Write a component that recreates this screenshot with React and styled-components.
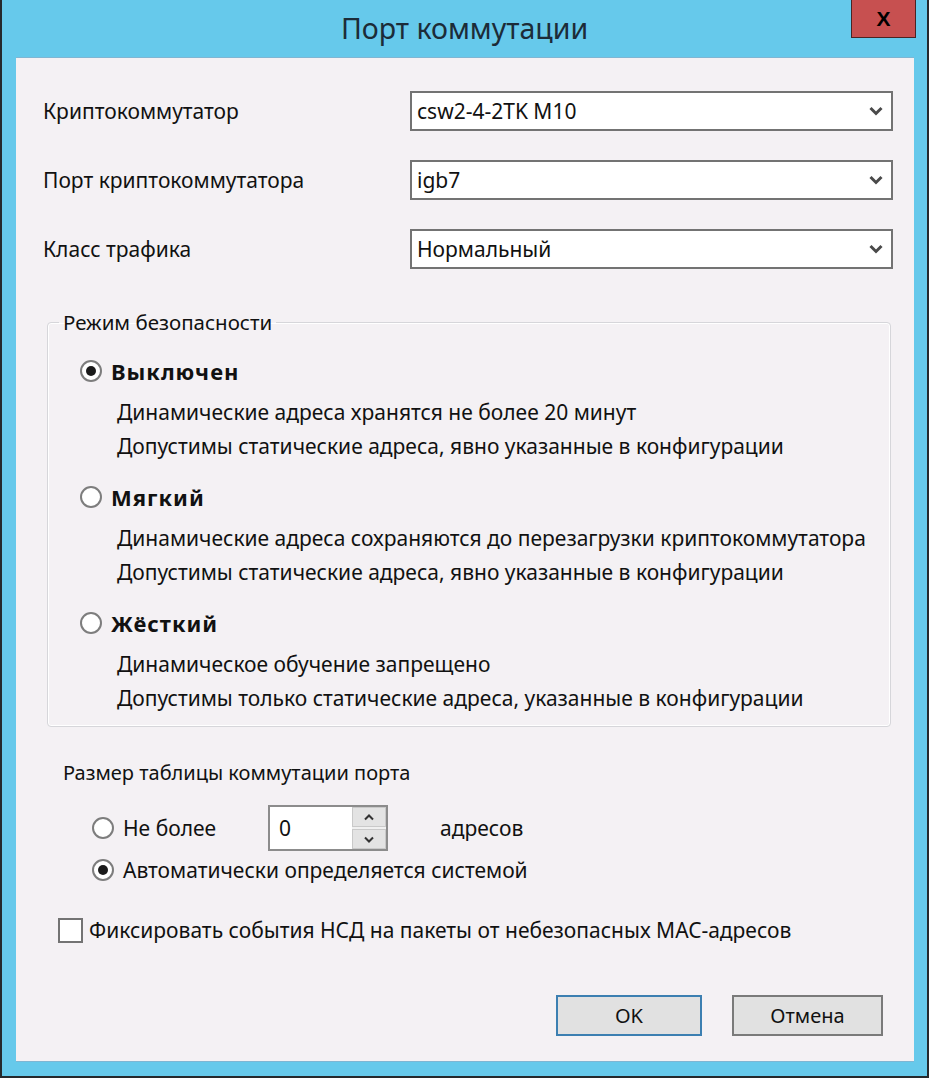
import React from "react";
import styled, { createGlobalStyle } from "styled-components";

const GlobalStyle = createGlobalStyle`
  html, body {
    margin: 0;
    padding: 0;
    background: #ffffff;
  }
  body {
    font-family: "Noto Sans", "Liberation Sans", sans-serif;
    color: #111111;
  }
`;

const Window = styled.div`
  box-sizing: border-box;
  width: 929px;
  height: 1078px;
  background: #66c9eb;
  border: 2px solid #25292c;
  border-top: none;
  display: flex;
  flex-direction: column;
`;

const TitleBar = styled.div`
  height: 57px;
  flex: none;
  display: grid;
  grid-template-columns: 1fr auto 1fr;
  align-items: start;
`;

const Title = styled.div`
  grid-column: 2;
  font-size: 28.5px;
  line-height: 56px;
  color: #1c2c38;
`;

const CloseButton = styled.div`
  grid-column: 3;
  justify-self: end;
  margin-right: 11px;
  box-sizing: border-box;
  width: 65px;
  height: 38px;
  background: #c75050;
  border: 1px solid #4a2424;
  border-top: none;
  display: flex;
  align-items: center;
  justify-content: center;
  font-family: "Liberation Sans", sans-serif;
  font-weight: 700;
  font-size: 21px;
  color: #000;
`;

const Body = styled.div`
  flex: 1;
  margin: 0 13px 14px 14px;
  background: #f4f1f4;
  border-top: 1px solid #7fb6d3;
  border-bottom: 1px solid #7fb6d3;
  padding: 33px 21px 0 27px;
  display: flex;
  flex-direction: column;
  font-size: 21px;
`;

const FormGrid = styled.div`
  display: grid;
  grid-template-columns: 367px 483px;
  grid-auto-rows: 40px;
  row-gap: 29px;
  align-items: center;
`;

const Label = styled.div`
  line-height: 28px;
`;

const Combo = styled.div`
  box-sizing: border-box;
  height: 40px;
  background: #ffffff;
  border: 2px solid #737373;
  display: flex;
  align-items: center;
  padding: 0 8px 0 5px;
`;

const ComboValue = styled.span`
  flex: 1;
  font-size: 21px;
`;

const Chevron = () => (
  <svg width="14" height="10" viewBox="0 0 14 10">
    <path d="M1.5 2 L7 7.5 L12.5 2" fill="none" stroke="#4a4a4a" strokeWidth="3" />
  </svg>
);

const GroupBox = styled.fieldset`
  box-sizing: border-box;
  width: 844px;
  margin: 39px 0 0 4px;
  padding: 18px 10px 11px 11px;
  border: 1px solid #d6d6da;
  border-radius: 4px;
  box-shadow: inset 0 0 0 1px #ffffff;
`;

const Legend = styled.legend`
  padding: 0 4px;
  line-height: 28px;
  font-size: 20.5px;
`;

const Option = styled.div`
  margin-left: 21px;
  & + & {
    margin-top: 17px;
  }
`;

const RadioRow = styled.div`
  display: flex;
  align-items: center;
  gap: 9px;
  height: 34px;
`;

const Radio = styled.span`
  box-sizing: border-box;
  width: 22px;
  height: 22px;
  flex: none;
  border-radius: 50%;
  border: 2px solid #7d7d7d;
  background: #ffffff;
  display: flex;
  align-items: center;
  justify-content: center;
  &::after {
    content: "";
    width: 10px;
    height: 10px;
    border-radius: 50%;
    background: #1a1a1a;
    display: ${(p) => (p.$checked ? "block" : "none")};
  }
`;

const OptionTitle = styled.span`
  font-weight: 700;
  font-size: 22px;
  letter-spacing: 1px;
`;

const Desc = styled.div`
  margin: 7px 0 0 37px;
  line-height: 34px;
`;

const SectionLabel = styled.div`
  margin: 32px 0 0 20px;
  line-height: 28px;
  font-size: 20px;
`;

const SizeRows = styled.div`
  margin: 18px 0 0 49px;
  display: flex;
  flex-direction: column;
  gap: 2px;
`;

const SizeRow = styled.div`
  display: flex;
  align-items: center;
  height: ${(p) => p.$h || 34}px;
`;

const SizeLabel = styled.span`
  margin-left: 9px;
  width: ${(p) => (p.$w ? `${p.$w}px` : "auto")};
`;

const SpinBox = styled.div`
  box-sizing: border-box;
  width: 120px;
  height: 46px;
  display: flex;
  border: 2px solid #8c8c8c;
  background: #ffffff;
`;

const SpinValue = styled.div`
  flex: 1;
  padding-left: 9px;
  display: flex;
  align-items: center;
`;

const SpinButtons = styled.div`
  width: 34px;
  display: flex;
  flex-direction: column;
  gap: 2px;
  background: #f0f0f0;
`;

const SpinButton = styled.div`
  flex: 1;
  background: #e3e3e3;
  border: 1px solid #c9c9c9;
  display: flex;
  align-items: center;
  justify-content: center;
`;

const Units = styled.span`
  margin-left: 52px;
`;

const CheckRow = styled.div`
  margin: 26px 0 0 15px;
  display: flex;
  align-items: center;
  gap: 6px;
  height: 34px;
`;

const CheckBox = styled.span`
  box-sizing: border-box;
  width: 25px;
  height: 25px;
  flex: none;
  border: 2px solid #737373;
  background: #ffffff;
`;

const ButtonRow = styled.div`
  margin: 48px 10px 0 0;
  display: flex;
  justify-content: flex-end;
  gap: 30px;
`;

const Button = styled.div`
  box-sizing: border-box;
  width: ${(p) => p.$w}px;
  height: 41px;
  background: #e1e1e1;
  border: 2px solid ${(p) => (p.$default ? "#3c7fb1" : "#7a7a7a")};
  display: flex;
  align-items: center;
  justify-content: center;
  font-size: 20px;
`;

const options = [
  {
    title: "Выключен",
    checked: true,
    lines: [
      "Динамические адреса хранятся не более 20 минут",
      "Допустимы статические адреса, явно указанные в конфигурации",
    ],
  },
  {
    title: "Мягкий",
    lines: [
      "Динамические адреса сохраняются до перезагрузки криптокоммутатора",
      "Допустимы статические адреса, явно указанные в конфигурации",
    ],
  },
  {
    title: "Жёсткий",
    lines: [
      "Динамическое обучение запрещено",
      "Допустимы только статические адреса, указанные в конфигурации",
    ],
  },
];

const fields = [
  ["Криптокоммутатор", "csw2-4-2TK M10"],
  ["Порт криптокоммутатора", "igb7"],
  ["Класс трафика", "Нормальный"],
];

export default function App() {
  return (
    <>
      <GlobalStyle />
      <Window>
        <TitleBar>
          <Title>Порт коммутации</Title>
          <CloseButton>X</CloseButton>
        </TitleBar>
        <Body>
          <FormGrid>
            {fields.map(([label, value]) => (
              <React.Fragment key={label}>
                <Label>{label}</Label>
                <Combo>
                  <ComboValue>{value}</ComboValue>
                  <Chevron />
                </Combo>
              </React.Fragment>
            ))}
          </FormGrid>

          <GroupBox>
            <Legend>Режим безопасности</Legend>
            {options.map((o) => (
              <Option key={o.title}>
                <RadioRow>
                  <Radio $checked={o.checked} />
                  <OptionTitle>{o.title}</OptionTitle>
                </RadioRow>
                <Desc>
                  {o.lines.map((l) => (
                    <div key={l}>{l}</div>
                  ))}
                </Desc>
              </Option>
            ))}
          </GroupBox>

          <SectionLabel>Размер таблицы коммутации порта</SectionLabel>
          <SizeRows>
            <SizeRow $h={46}>
              <Radio />
              <SizeLabel $w={145}>Не более</SizeLabel>
              <SpinBox>
                <SpinValue>0</SpinValue>
                <SpinButtons>
                  <SpinButton>
                    <svg width="10" height="7" viewBox="0 0 10 7">
                      <path d="M1 5.5 L5 1.5 L9 5.5" fill="none" stroke="#333" strokeWidth="2" />
                    </svg>
                  </SpinButton>
                  <SpinButton>
                    <svg width="10" height="7" viewBox="0 0 10 7">
                      <path d="M1 1.5 L5 5.5 L9 1.5" fill="none" stroke="#333" strokeWidth="2" />
                    </svg>
                  </SpinButton>
                </SpinButtons>
              </SpinBox>
              <Units>адресов</Units>
            </SizeRow>
            <SizeRow>
              <Radio $checked />
              <SizeLabel>Автоматически определяется системой</SizeLabel>
            </SizeRow>
          </SizeRows>

          <CheckRow>
            <CheckBox />
            <span>Фиксировать события НСД на пакеты от небезопасных MAC-адресов</span>
          </CheckRow>

          <ButtonRow>
            <Button $w={146} $default>
              OK
            </Button>
            <Button $w={151}>Отмена</Button>
          </ButtonRow>
        </Body>
      </Window>
    </>
  );
}
